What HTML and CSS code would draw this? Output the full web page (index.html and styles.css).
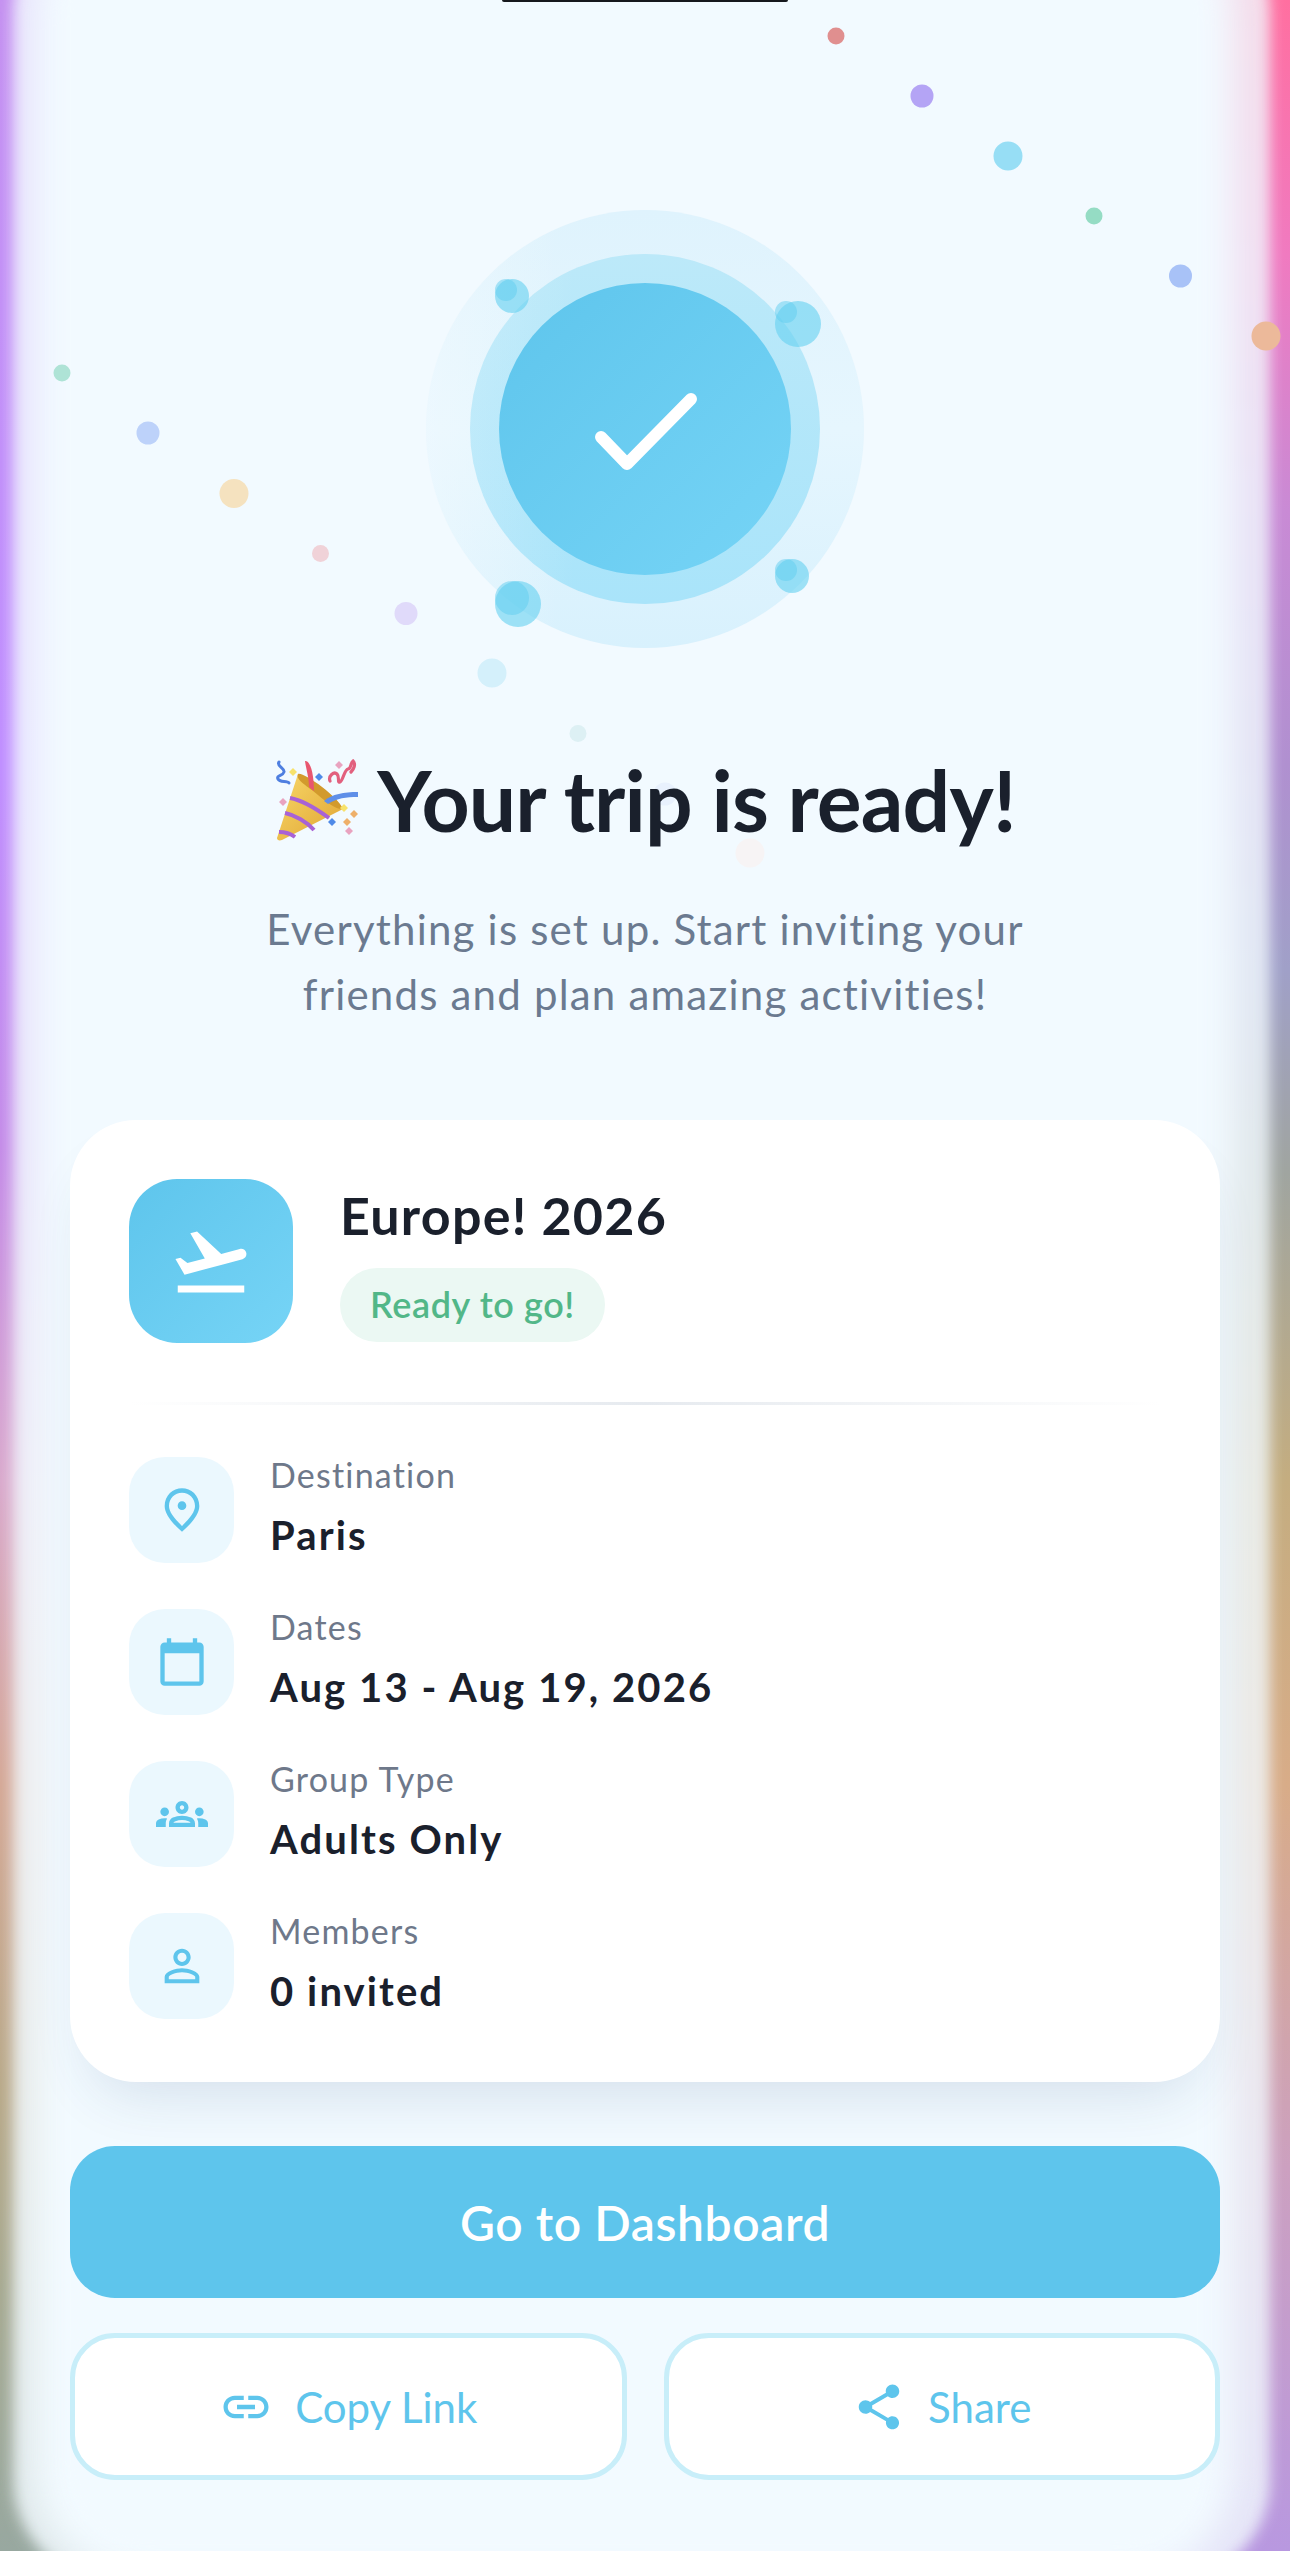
FILE: index.html
```html
<!DOCTYPE html>
<html>
  <head>
    <meta charset="utf-8" />
    <meta name="viewport" content="width=device-width" />
    <title>Your trip is ready!</title>
    <link rel="stylesheet" href="styles.css">
  </head>
  <body>
    <div class="screen">
      <div class="edges">
        <div class="edge-left"></div>
        <div class="edge-right"></div>
      </div>
      <div class="glass glass-a"></div>
      <div class="glass glass-b"></div>
      <div class="notch"></div>

      <svg class="confetti" viewBox="0 0 1290 2551">
        <circle cx="836" cy="36" r="8.5" fill="#e08f8f" />
        <circle cx="922" cy="96" r="11.5" fill="#b4a4f5" />
        <circle cx="1008" cy="156" r="14.5" fill="#97def5" />
        <circle cx="1094" cy="216" r="8.5" fill="#95dcc4" />
        <circle cx="1180.5" cy="276" r="11.5" fill="#a8c2f7" />
        <circle cx="1266" cy="336" r="14.5" fill="#ecb99a" />
        <circle cx="62" cy="373" r="8.5" fill="#aee3d6" />
        <circle cx="148" cy="433" r="11.5" fill="#bdd2fa" />
        <circle cx="234" cy="493.5" r="14.5" fill="#f5e2bf" />
        <circle cx="320.5" cy="553.5" r="8.5" fill="#f0d2d8" />
        <circle cx="406" cy="613.5" r="11.5" fill="#e0dafa" />
        <circle cx="492" cy="673" r="14.5" fill="#d4f0fb" />
        <circle cx="578" cy="733.5" r="8.5" fill="#ddf0f4" />
        <circle cx="665" cy="794" r="11.5" fill="#e8f1fd" />
        <circle cx="750" cy="853" r="14.5" fill="#f7f4f5" />
      </svg>

      <div class="hero">
        <div class="ring-outer"></div>
        <div class="ring-middle"></div>
        <div class="ring-inner">
          <svg class="check" viewBox="0 0 102 77" width="102" height="77">
            <path d="M6 44 32 71 96 6" fill="none" stroke="#fff" stroke-width="12" stroke-linecap="round" stroke-linejoin="round" />
          </svg>
        </div>
        <div class="bubble bubble-tl"><span></span></div>
        <div class="bubble bubble-tr"><span></span></div>
        <div class="bubble bubble-bl"><span></span></div>
        <div class="bubble bubble-br"><span></span></div>
      </div>

      <h1 class="title">
        <svg class="popper" viewBox="0 0 85 82" width="85" height="82">
          <defs>
            <linearGradient id="cone" x1="0" y1="0" x2="1" y2="1">
              <stop offset="0" stop-color="#f8d868" />
              <stop offset="1" stop-color="#e0a433" />
            </linearGradient>
          </defs>
          <path d="M5 3C2 7 11 9 10 13S2 16 4 20s9 1 11 4" fill="none" stroke="#4f7fe0" stroke-width="3" stroke-linecap="round" />
          <path d="M56 22c-2-5 4-10 7-7s0 9 3 8 4-12 8-13 2-6 5-8c3 3 1 8-2 11" fill="none" stroke="#e2607e" stroke-width="3.2" stroke-linecap="round" />
          <path d="M3 79 24 15c10 2 38 22 45 35L8 81c-3 1-5 0-5-2z" fill="url(#cone)" />
          <path d="M16 39c12 2 28 12 39 20M11 54c10 2 22 9 29 17M5 73c6 0 12 2 16 5" fill="none" stroke="#a862d6" stroke-width="4" />
          <path d="M24 15c4-3 40 22 45 35-6 1-16-6-25-14S21 21 24 15z" fill="#d29a2c" />
          <path d="M31 2c5-1 9 12 9 30l-5-4C35 18 32 10 31 2z" fill="#e8566f" />
          <path d="M50 42c8-7 20-9 34-9v5c-12 0-21 1-30 7z" fill="#5f8fe8" />
          <path d="M65 2l4 4-4 4-4-4zM9 39l4 4-4 4-4-4zM75 68l4 4-4 4-4-4z" fill="#e9a3c0" />
          <path d="M19 9l4 4-4 4-4-4zM70 45l4 4-4 4-4-4z" fill="#f7e26b" />
          <path d="M45 14l4 4-4 4-4-4zM58 59l4 4-4 4-4-4z" fill="#4f8ae8" />
          <path d="M80 51l4 4-4 4-4-4zM73 59l4 4-4 4-4-4z" fill="#eeb06a" />
        </svg>
        <span>Your trip is ready!</span>
      </h1>
      <p class="subtitle">Everything is set up. Start inviting your<br>friends and plan amazing activities!</p>

      <div class="card">
        <div class="trip-head">
          <div class="trip-icon">
            <svg viewBox="0 0 24 24" width="84" height="84" fill="#fff"><path d="M2.5 19h19v2h-19v-2zm19.57-9.36c-.21-.8-1.04-1.28-1.84-1.06L14.92 10l-6.9-6.43-1.93.51 4.14 7.17-4.97 1.33-1.97-1.54-1.45.39 1.82 3.16.77 1.33 1.6-.43 5.31-1.42 4.35-1.16L21 11.49c.81-.23 1.28-1.05 1.07-1.85z" /></svg>
          </div>
          <div class="trip-info">
            <div class="trip-name">Europe! 2026</div>
            <div class="badge">Ready to go!</div>
          </div>
        </div>
        <div class="divider"></div>
        <div class="rows">
          <div class="row">
            <div class="row-icon">
              <svg viewBox="0 0 24 24" width="52" height="52"><path d="M12 12c-1.1 0-2-.9-2-2s.9-2 2-2 2 .9 2 2-.9 2-2 2zm6-1.8C18 6.57 15.35 4 12 4s-6 2.57-6 6.2c0 2.34 1.95 5.44 6 9.14 4.05-3.7 6-6.8 6-9.14zM12 2c4.2 0 8 3.22 8 8.2 0 3.32-2.67 7.25-8 11.8-5.33-4.55-8-8.48-8-11.8C4 5.22 7.8 2 12 2z" /></svg>
            </div>
            <div>
              <div class="row-label">Destination</div>
              <div class="row-value">Paris</div>
            </div>
          </div>
          <div class="row">
            <div class="row-icon">
              <svg viewBox="0 0 24 24" width="52" height="52"><path d="M20 3h-1V1h-2v2H7V1H5v2H4c-1.1 0-2 .9-2 2v16c0 1.1.9 2 2 2h16c1.1 0 2-.9 2-2V5c0-1.1-.9-2-2-2zm0 18H4V8h16v13z" /></svg>
            </div>
            <div>
              <div class="row-label">Dates</div>
              <div class="row-value">Aug 13 - Aug 19, 2026</div>
            </div>
          </div>
          <div class="row">
            <div class="row-icon">
              <svg viewBox="0 0 24 24" width="52" height="52"><path d="M4 13c1.1 0 2-.9 2-2s-.9-2-2-2-2 .9-2 2 .9 2 2 2zm1.13 1.1c-.37-.06-.74-.1-1.13-.1-.99 0-1.93.21-2.78.58C.48 14.9 0 15.62 0 16.43V18h4.5v-1.61c0-.83.23-1.61.63-2.29zM20 13c1.1 0 2-.9 2-2s-.9-2-2-2-2 .9-2 2 .9 2 2 2zm4 3.43c0-.81-.48-1.53-1.22-1.85-.85-.37-1.79-.58-2.78-.58-.39 0-.76.04-1.13.1.4.68.63 1.46.63 2.29V18H24v-1.57zm-7.76-2.78c-1.17-.52-2.61-.9-4.24-.9-1.63 0-3.07.39-4.24.9C6.68 14.13 6 15.21 6 16.39V18h12v-1.61c0-1.18-.68-2.26-1.76-2.74zM8.07 16c.09-.23.13-.39.91-.69.97-.38 1.99-.56 3.02-.56s2.05.18 3.02.56c.77.3.81.46.91.69H8.07zM12 8c.55 0 1 .45 1 1s-.45 1-1 1-1-.45-1-1 .45-1 1-1m0-2c-1.66 0-3 1.34-3 3s1.34 3 3 3 3-1.34 3-3-1.34-3-3-3z" /></svg>
            </div>
            <div>
              <div class="row-label">Group Type</div>
              <div class="row-value">Adults Only</div>
            </div>
          </div>
          <div class="row">
            <div class="row-icon">
              <svg viewBox="0 0 24 24" width="52" height="52"><path d="M12 5.9c1.16 0 2.1.94 2.1 2.1s-.94 2.1-2.1 2.1S9.9 9.16 9.9 8s.94-2.1 2.1-2.1m0 9c2.97 0 6.1 1.46 6.1 2.1v1.1H5.9V17c0-.64 3.13-2.1 6.1-2.1M12 4C9.79 4 8 5.79 8 8s1.79 4 4 4 4-1.79 4-4-1.79-4-4-4zm0 9c-2.67 0-8 1.34-8 4v3h16v-3c0-2.66-5.33-4-8-4z" /></svg>
            </div>
            <div>
              <div class="row-label">Members</div>
              <div class="row-value">0 invited</div>
            </div>
          </div>
        </div>
      </div>

      <button class="btn-primary">Go to Dashboard</button>
      <div class="btn-row">
        <button class="btn-secondary">
          <svg viewBox="0 0 24 24" width="54" height="54"><path d="M3.9 12c0-1.71 1.39-3.1 3.1-3.1h4V7H7c-2.76 0-5 2.24-5 5s2.24 5 5 5h4v-1.9H7c-1.71 0-3.1-1.39-3.1-3.1zM8 13h8v-2H8v2zm9-6h-4v1.9h4c1.71 0 3.1 1.39 3.1 3.1s-1.39 3.1-3.1 3.1h-4V17h4c2.76 0 5-2.24 5-5s-2.24-5-5-5z" /></svg>
          Copy Link
        </button>
        <button class="btn-secondary">
          <svg viewBox="0 0 24 24" width="54" height="54"><path d="M18 16.08c-.76 0-1.44.3-1.96.77L8.91 12.7c.05-.23.09-.46.09-.7s-.04-.47-.09-.7l7.05-4.11c.54.5 1.25.81 2.04.81 1.66 0 3-1.34 3-3s-1.34-3-3-3-3 1.34-3 3c0 .24.04.47.09.7L8.04 9.81C7.5 9.31 6.79 9 6 9c-1.66 0-3 1.34-3 3s1.34 3 3 3c.79 0 1.5-.31 2.04-.81l7.12 4.16c-.05.21-.08.43-.08.65 0 1.61 1.31 2.92 2.92 2.92 1.61 0 2.92-1.31 2.92-2.92s-1.31-2.92-2.92-2.92z" /></svg>
          Share
        </button>
      </div>
    </div>
  </body>
</html>
```

FILE: styles.css
```css
html,
body {
  margin: 0;
  background: #f2faff;
  font-family: "Lato", "Noto Sans", sans-serif;
}
.screen {
  position: relative;
  box-sizing: border-box;
  width: 1290px;
  height: 2551px;
  padding: 210px 70px 0;
  overflow: hidden;
}

/* coloured glow round the screen edge */
.edges {
  position: absolute;
  inset: 0;
  display: flex;
}
.edge-left,
.edge-right {
  flex: 1;
}
.edge-left {
  background: linear-gradient(#c48ff0 0%, #bf8cff 30%, #c48ae8 45%, #d9a8cc 58%, #d4a795 70%, #b8a888 82%, #a5a890 90%, #98a8a0 100%);
}
.edge-right {
  background: linear-gradient(#ff6fa0 0%, #f07ac0 10%, #c98ad5 20%, #b090d0 30%, #a0a0c8 38%, #a0a5a0 46%, #c4ad80 58%, #d8ac88 70%, #cca0c0 85%, #b898e0 100%);
}
.glass {
  position: absolute;
  background: #f2faff;
}
.glass-a {
  inset: -80px 20px -30px 14px;
  border-radius: 90px 90px 100px 100px;
  opacity: 0.78;
  filter: blur(7px);
}
.glass-b {
  inset: -80px 56px -30px 34px;
  border-radius: 90px 90px 110px 110px;
  filter: blur(18px);
}
.notch {
  position: absolute;
  top: 0;
  left: 502px;
  width: 286px;
  height: 2px;
  background: #16181d;
  border-radius: 0 0 6px 6px;
}
.confetti {
  position: absolute;
  top: 0;
  left: 0;
  width: 1290px;
  height: 2551px;
}

/* check mark */
.hero {
  position: relative;
  width: 438px;
  height: 438px;
  margin: 0 auto;
}
.ring-outer,
.ring-middle,
.ring-inner {
  position: absolute;
  border-radius: 50%;
}
.ring-outer {
  inset: 0;
  background: linear-gradient(90deg, rgba(242, 250, 255, 0.55), transparent 30%), linear-gradient(#dff3fd, #e6f6fe 50%, #d8f1fd);
}
.ring-middle {
  inset: 44px;
  background: linear-gradient(90deg, rgba(242, 250, 255, 0.2), transparent 30%), linear-gradient(#bce9f9, #a9e4fa);
}
.ring-inner {
  inset: 73px;
  display: flex;
  align-items: center;
  justify-content: center;
  background: linear-gradient(135deg, #5ec5ec, #76d4f6);
}
.check {
  margin: 4px 0 0 2px;
}
.bubble {
  position: absolute;
  border-radius: 50%;
  background: rgba(100, 208, 240, 0.6);
}
.bubble span {
  position: absolute;
  top: 0;
  left: 0;
  width: 22px;
  height: 22px;
  border-radius: 50%;
  background: rgba(95, 205, 240, 0.5);
}
.bubble-tl {
  left: 69px;
  top: 69px;
  width: 34px;
  height: 34px;
}
.bubble-tr {
  left: 349px;
  top: 91px;
  width: 46px;
  height: 46px;
}
.bubble-bl {
  left: 69px;
  top: 371px;
  width: 46px;
  height: 46px;
}
.bubble-bl span {
  width: 34px;
  height: 34px;
}
.bubble-br {
  left: 349px;
  top: 349px;
  width: 34px;
  height: 34px;
}

/* heading */
.title {
  position: relative;
  display: flex;
  align-items: center;
  justify-content: center;
  gap: 18px;
  height: 100px;
  margin: 102px 0 0;
  font-size: 84px;
  line-height: 100px;
  font-weight: 700;
  letter-spacing: -0.85px;
  color: #1a202c;
}
.popper {
  flex: none;
}
.subtitle {
  position: relative;
  margin: 47px 0 0;
  font-size: 42px;
  line-height: 65px;
  letter-spacing: 1.2px;
  text-align: center;
  color: #6b7a90;
}

/* trip card */
.card {
  position: relative;
  box-sizing: border-box;
  height: 962px;
  margin-top: 93px;
  padding: 59px 59px 0;
  background: #fff;
  border-radius: 66px;
  box-shadow: 0 32px 60px -24px rgba(40, 70, 120, 0.16);
}
.trip-head {
  display: flex;
  gap: 47px;
}
.trip-icon {
  display: flex;
  align-items: center;
  justify-content: center;
  width: 164px;
  height: 164px;
  border-radius: 48px;
  background: linear-gradient(135deg, #5ec5ec, #76d4f6);
}
.trip-info {
  padding-top: 4px;
}
.trip-name {
  height: 64px;
  font-size: 52px;
  line-height: 64px;
  font-weight: 700;
  letter-spacing: 1.25px;
  color: #1a202c;
}
.badge {
  display: inline-block;
  height: 74px;
  margin-top: 21px;
  padding: 0 30px;
  border-radius: 37px;
  font-size: 36px;
  line-height: 72px;
  font-weight: 600;
  letter-spacing: 0.6px;
  color: #52b788;
  background: #ebf8f3;
}
.divider {
  height: 3px;
  margin: 59px 0 52px;
  background: linear-gradient(90deg, transparent, #e6eaef 50%, transparent);
}
.rows {
  display: flex;
  flex-direction: column;
  gap: 46px;
}
.row {
  display: flex;
  gap: 36px;
}
.row-icon {
  display: flex;
  align-items: center;
  justify-content: center;
  width: 105px;
  height: 106px;
  border-radius: 36px;
  background: #ebf8fe;
}
.row-icon svg,
.btn-secondary svg {
  fill: #5ec5ec;
}
.row-label {
  height: 36px;
  font-size: 34px;
  line-height: 36px;
  letter-spacing: 1.2px;
  color: #6e788a;
}
.row-value {
  height: 50px;
  margin-top: 17px;
  font-size: 40px;
  line-height: 50px;
  font-weight: 700;
  letter-spacing: 2.1px;
  color: #1a202c;
}

/* buttons */
button {
  font-family: inherit;
  cursor: pointer;
}
.btn-primary {
  position: relative;
  display: block;
  width: 100%;
  height: 152px;
  margin-top: 64px;
  border: 0;
  border-radius: 45px;
  font-size: 48px;
  font-weight: 600;
  letter-spacing: 0.6px;
  color: #fff;
  background: #5ec5ec;
}
.btn-row {
  position: relative;
  display: grid;
  grid-template-columns: 1fr 1fr;
  gap: 37px;
  margin-top: 35px;
}
.btn-secondary {
  display: flex;
  align-items: center;
  justify-content: center;
  gap: 22px;
  height: 147px;
  border: 5px solid #c8eef9;
  border-radius: 45px;
  font-size: 42px;
  color: #5ec5ec;
  background: #fff;
}
```
